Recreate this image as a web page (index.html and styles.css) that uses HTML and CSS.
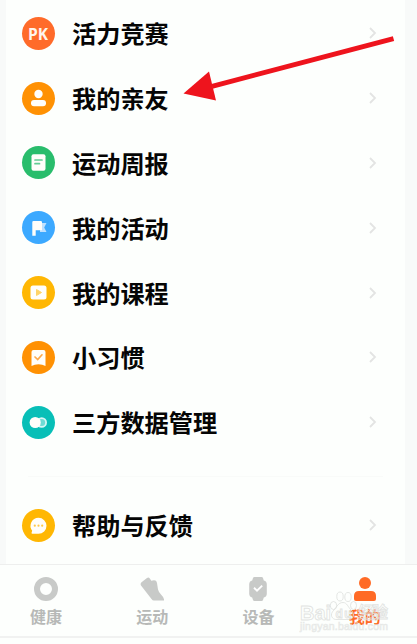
FILE: index.html
```html
<!DOCTYPE html>
<html lang="zh-CN">
<head>
    <meta charset="UTF-8">
    <meta name="viewport" content="width=device-width, initial-scale=1.0">
    <title>我的</title>
    <link rel="stylesheet" href="styles.css">
</head>
<body>
    <main class="page">
        <ul class="menu">
            <li class="row">
                <span class="icon pk">PK</span>
                <span class="label">活力竞赛</span>
                <svg class="chevron" viewBox="0 0 8 12"><path d="M1 1l5 5-5 5"/></svg>
            </li>
            <li class="row">
                <span class="icon orange">
                    <svg viewBox="0 0 33 33"><circle cx="16.5" cy="12" r="4.2"/><rect x="9" y="18" width="15" height="6.2" rx="3"/></svg>
                </span>
                <span class="label">我的亲友</span>
                <svg class="chevron" viewBox="0 0 8 12"><path d="M1 1l5 5-5 5"/></svg>
            </li>
            <li class="row">
                <span class="icon green">
                    <svg viewBox="0 0 33 33"><rect x="9.5" y="8.3" width="14" height="16.4" rx="2"/><path class="line" d="M13 14h7M13 17.7h4.5" stroke="#63cc93"/></svg>
                </span>
                <span class="label">运动周报</span>
                <svg class="chevron" viewBox="0 0 8 12"><path d="M1 1l5 5-5 5"/></svg>
            </li>
            <li class="row">
                <span class="icon blue">
                    <svg viewBox="0 0 33 33"><path d="M18 12h6.5l-2.3 4.5 2.3 4.5H18z" fill="#bfe1ff"/><path d="M10.3 11.2q0-1.2 1.2-1.2h7.3q1.2 0 1.2 1.2v8.1h-6.3v5.5h-3.4z"/></svg>
                </span>
                <span class="label">我的活动</span>
                <svg class="chevron" viewBox="0 0 8 12"><path d="M1 1l5 5-5 5"/></svg>
            </li>
            <li class="row">
                <span class="icon yellow">
                    <svg viewBox="0 0 33 33"><rect x="8.5" y="9.5" width="16" height="14" rx="2.5"/><path d="M14.5 13.5v6l5-3z" fill="#ffd467" stroke="#ffd467" stroke-linejoin="round"/></svg>
                </span>
                <span class="label">我的课程</span>
                <svg class="chevron" viewBox="0 0 8 12"><path d="M1 1l5 5-5 5"/></svg>
            </li>
            <li class="row">
                <span class="icon orange">
                    <svg viewBox="0 0 33 33"><path d="M9.5 11q0-2 2-2h10q2 0 2 2v14q-3-1.7-7-1.7t-7 1.7z"/><path class="line" d="M13 16l2.7 2.6 4.3-4.8" stroke="#ffa94a"/></svg>
                </span>
                <span class="label">小习惯</span>
                <svg class="chevron" viewBox="0 0 8 12"><path d="M1 1l5 5-5 5"/></svg>
            </li>
            <li class="row">
                <span class="icon teal">
                    <svg viewBox="0 0 33 33"><circle cx="19.7" cy="16.5" r="4.4" fill="#6fdbd4" stroke="#d8f6f4" stroke-width="1.8"/><circle cx="13.2" cy="16.5" r="5.6"/></svg>
                </span>
                <span class="label">三方数据管理</span>
                <svg class="chevron" viewBox="0 0 8 12"><path d="M1 1l5 5-5 5"/></svg>
            </li>
        </ul>
        <div class="divider"></div>
        <ul class="menu">
            <li class="row">
                <span class="icon yellow">
                    <svg viewBox="0 0 33 33"><path d="M16.5 8.8a8 8 0 1 1 0 16h-6q-1.3 0-.9-1.2l.6-1.9a8 8 0 0 1 6.3-12.9z"/><g fill="#ffc94a"><circle cx="12.8" cy="16.7" r="1.1"/><circle cx="16.5" cy="16.7" r="1.1"/><circle cx="20.2" cy="16.7" r="1.1"/></g></svg>
                </span>
                <span class="label">帮助与反馈</span>
                <svg class="chevron" viewBox="0 0 8 12"><path d="M1 1l5 5-5 5"/></svg>
            </li>
        </ul>
    </main>

    <nav class="tabs">
        <div class="tab">
            <svg viewBox="0 0 24 24"><circle cx="12" cy="12" r="9" fill="none" stroke="currentColor" stroke-width="6"/></svg>
            <span>健康</span>
        </div>
        <div class="tab">
            <svg viewBox="0 0 24 24"><path d="M1.500 5.200L7 1Q8.700 0 9.800 1.500L11.300 3.800Q13.500 2.800 15.500 3.500Q16.700 4 17 6L18 12.500Q18.400 14.500 21 17.500Q24.500 21 24 23.500H14Q12.500 23.500 11.500 22L1 8.500Q0 6.700 1.500 5.200z"/></svg>
            <span>运动</span>
        </div>
        <div class="tab">
            <svg viewBox="0 0 24 24"><path d="M8.500 0h7q1.200 0 1.500 1l.8 2.500q3 .8 3 3.800v9.400q0 3-3 3.800L17 23q-.3 1-1.500 1h-7Q7.300 24 7 23l-.8-2.500q-3-.8-3-3.800V7.300q0-3 3-3.800L7 1q.3-1 1.500-1z"/><path d="M8 10.800l3 2.800 5.200-5" fill="none" stroke="#fff" stroke-width="1.900"/></svg>
            <span>设备</span>
        </div>
        <div class="tab active">
            <svg viewBox="0 0 24 24"><circle cx="12" cy="6" r="6"/><path d="M1 19q0-5 5-5h12q5 0 5 5v3q0 2-2 2H3q-2 0-2-2z"/></svg>
            <span>我的</span>
        </div>
    </nav>

    <svg class="arrow" viewBox="0 0 417 120">
        <path d="M212 86.300L393.500 38.700" stroke="#ee141d" stroke-width="5"/>
        <path d="M183.500 93.500l25.500-22 7 29z" fill="#ee141d"/>
    </svg>

    <svg class="watermark" viewBox="0 0 96 48">
        <ellipse cx="34.500" cy="14.500" rx="3.200" ry="4"/>
        <ellipse cx="41" cy="5.500" rx="3.200" ry="4.500"/>
        <ellipse cx="49" cy="6" rx="3.200" ry="4.500"/>
        <ellipse cx="54.500" cy="14.500" rx="3" ry="4"/>
        <path d="M44 11.500c4 0 5 4.500 8 7.500 5 4.500 2 10-3 9.500H38c-5 .5-8-5-3-9.500 3-3 4-7.500 9-7.500z"/>
        <text x="1" y="28.500" font-size="20" textLength="31" lengthAdjust="spacingAndGlyphs">Bai</text>
        <text x="36.500" y="26.500" font-size="12" textLength="16">du</text>
        <text x="59" y="27" font-size="16" textLength="30">经验</text>
        <text class="site" x="1" y="38.500" font-size="10.500" textLength="88">jingyan.baidu.com</text>
    </svg>
</body>
</html>
```
FILE: styles.css
```css
*{
    margin: 0;
    padding: 0;
    box-sizing: border-box;
}

body{
    height: 644px;
    overflow: hidden;
    background-color: #fdfffd;
    font-family: "Noto Sans CJK SC", sans-serif;
    color: #050505;
}

.page{
    height: 564px;
    padding-top: 1px;
    border-left: 6px solid #f8faf9;
    border-right: 12px solid #f8faf9;
}

.menu{
    list-style: none;
}

.row{
    height: 64.8px;
    padding: 0 28px 0 15.500px;
    display: flex;
    align-items: center;
}

.icon{
    width: 33px;
    height: 33px;
    margin-right: 17.500px;
    border-radius: 50%;
    flex: none;
}

.icon svg{
    display: block;
    width: 33px;
    height: 33px;
    fill: #fffefa;
}

.icon .line{
    fill: none;
    stroke-width: 1.7;
    stroke-linecap: round;
}

.pk{
    background-color: #ff6b2a;
    color: #fff5ed;
    font: bold 15.500px/34px "Open Sans", sans-serif;
    text-align: center;
}

.orange{
    background-color: #ff9103;
}

.green{
    background-color: #29bd6c;
}

.blue{
    background-color: #3ca9ff;
}

.yellow{
    background-color: #ffb703;
}

.teal{
    background-color: #08bfb7;
}

.label{
    flex: 1;
    font-size: 24.200px;
    font-weight: 700;
    line-height: 36px;
}

.chevron{
    width: 8px;
    height: 12px;
    fill: none;
    stroke: #e3e4e3;
    stroke-width: 1.8;
}

.divider{
    height: 38.500px;
    margin: 0 22px;
    background: linear-gradient(#f9fbf9, #f9fbf9) 0 21px / 100% 1px no-repeat;
}

.tabs{
    height: 74px;
    padding: 12px 0 0;
    display: grid;
    grid-template-columns: repeat(4, 106.200px);
    margin-left: -7px;
    border-top: 1px solid #eeefee;
    border-bottom: 2px solid #f1f2f1;
}

.tab{
    display: flex;
    flex-direction: column;
    align-items: center;
    color: #c8cac8;
}

.tab svg{
    width: 24px;
    height: 24px;
    fill: currentColor;
}

.tab span{
    margin-top: 3px;
    color: #b7b9b7;
    font-size: 16px;
    font-weight: 700;
    line-height: 24px;
}

.tab.active, .tab.active span{
    color: #ff6b26;
}

.arrow{
    position: absolute;
    left: 0;
    top: 0;
    width: 417px;
    height: 120px;
}

/* translucent mark over the tab bar */
.watermark{
    position: absolute;
    left: 299px;
    top: 591px;
    width: 96px;
    height: 48px;
    fill: #fff;
    fill-opacity: 0.15;
    stroke: #dcdedc;
    stroke-width: 0.9;
    stroke-opacity: 0.85;
    font-family: "Liberation Sans", "Noto Sans CJK SC", sans-serif;
    font-weight: bold;
}

.watermark .site{
    font-weight: normal;
    stroke-width: 0.7;
    stroke-opacity: 0.7;
}
```
